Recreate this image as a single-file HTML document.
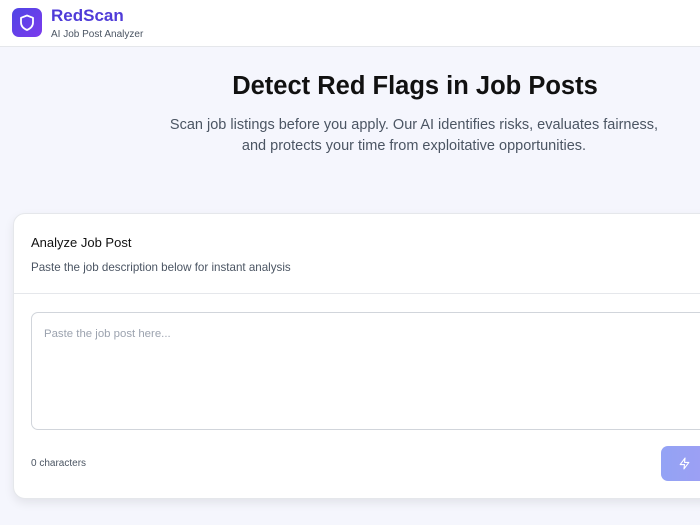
<!DOCTYPE html>
<html><head><style>
*{box-sizing:border-box;margin:0;padding:0}
body{width:700px;height:525px;overflow:hidden;background:#f5f6fd;font-family:"Liberation Sans",sans-serif;position:relative}
.hdr{position:absolute;left:0;top:0;width:700px;height:47px;background:#fff;border-bottom:1px solid #e5e7eb}
.logo{position:absolute;left:12px;top:8px;width:30px;height:29px;border-radius:7px;background:linear-gradient(135deg,#4f46e5,#7c3aed)}
.t1{position:absolute;left:51px;top:6px;font-size:17px;font-weight:bold;color:#4f3bd8}
.t2{position:absolute;left:51px;top:29px;font-size:10px;color:#4b5563}
h1{position:absolute;left:0;width:830px;top:72px;text-align:center;font-size:25.5px;font-weight:bold;color:#111}
.sub{position:absolute;left:0;width:828px;top:115px;text-align:center;font-size:14.5px;line-height:21px;color:#4b5563}
.card{position:absolute;left:13px;top:213px;width:710px;height:286px;background:#fff;border:1px solid #e5e7eb;border-radius:12px;box-shadow:0 4px 10px rgba(0,0,0,.08)}
.ct{position:absolute;left:17px;top:21px;font-size:13px;color:#111}
.cs{position:absolute;left:17px;top:47px;font-size:11.6px;color:#4b5563}
.sep{position:absolute;left:0;top:79px;width:100%;border-top:1px solid #e5e7eb}
.ta{position:absolute;left:17px;top:98px;width:700px;height:118px;border:1px solid #d1d5db;border-radius:7px}
.ph{position:absolute;left:12px;top:15px;font-size:11.4px;color:#9ca3af}
.cc{position:absolute;left:17px;top:244px;font-size:10px;color:#4b5563}
.btn{position:absolute;left:647px;top:232px;width:80px;height:35px;border-radius:7px;background:linear-gradient(90deg,#93a3f5,#a59cf2)}
</style></head><body>
<div class="hdr">
<div class="logo"><svg width="30" height="29" viewBox="0 0 30 29"><path d="M15 7.5 L21 9.8 V14.5 C21 18 18.5 20.5 15 22 C11.5 20.5 9 18 9 14.5 V9.8 Z" fill="none" stroke="#fff" stroke-width="1.8" stroke-linejoin="round"/></svg></div>
<div class="t1">RedScan</div><div class="t2">AI Job Post Analyzer</div>
</div>
<h1>Detect Red Flags in Job Posts</h1>
<div class="sub">Scan job listings before you apply. Our AI identifies risks, evaluates fairness,<br>and protects your time from exploitative opportunities.</div>
<div class="card">
<div class="ct">Analyze Job Post</div>
<div class="cs">Paste the job description below for instant analysis</div>
<div class="sep"></div>
<div class="ta"><div class="ph">Paste the job post here...</div></div>
<div class="cc">0 characters</div>
<div class="btn"><svg style="position:absolute;left:17px;top:11px" width="13" height="13" viewBox="0 0 24 24"><path d="M13 2 L4 14 H12 L11 22 L20 10 H12 Z" fill="none" stroke="#fff" stroke-width="2" stroke-linejoin="round"/></svg></div>
</div>
</body></html>
